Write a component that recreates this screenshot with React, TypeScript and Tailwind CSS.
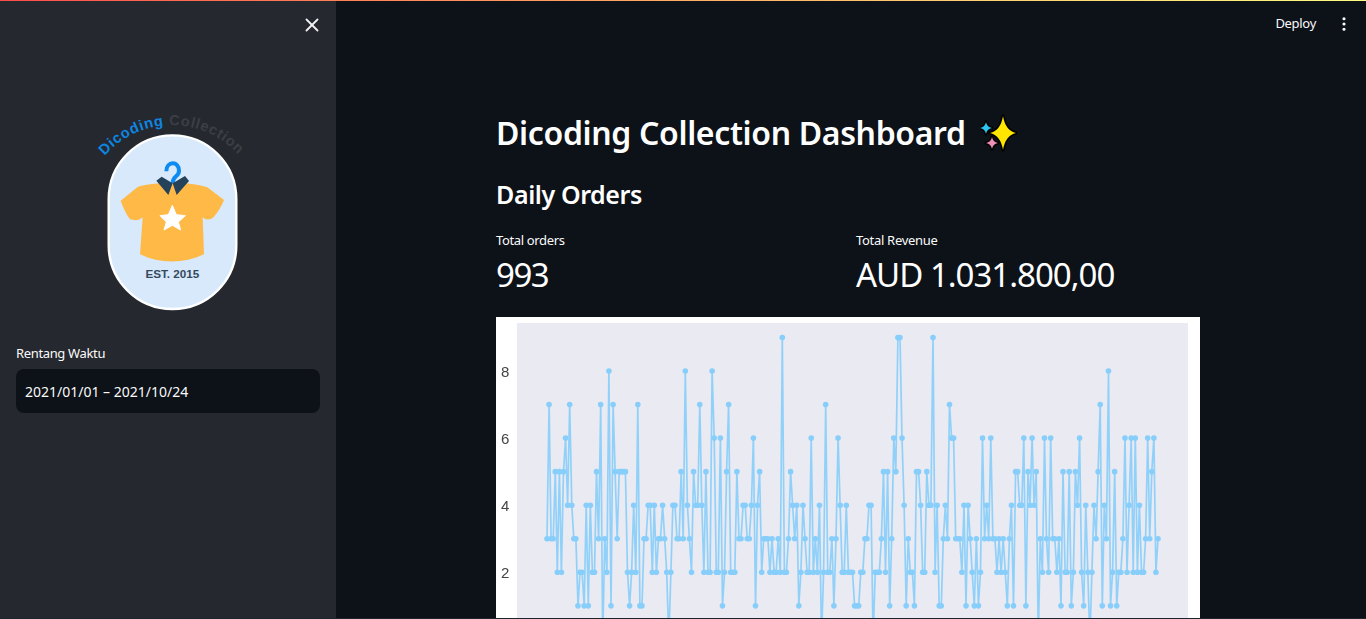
import { X, EllipsisVertical } from 'lucide-react'

const orders = [
  '3733525256', '4743312214', '1422537032', '8175355552', '1242711334',
  '4242334320', '2443353843', '2544742522', '8622612572', '2253344334',
  '6145233323', '2232922354', '3412432262', '3240272231', '3642242',
  '2211122334', '4022235251', '3659964132', '2155422544', '9241134376',
  '6333241432', '1312634363', '3232321341', '5544615464', '5032632633',
  '2315225125', '4621420243', '5714381251', '2236246262', '4223635623',
]
  .join('')
  .split('')
  .map(Number)

const toX = (i: number) => 51 + (i * 611) / (orders.length - 1)
const toY = (v: number) => 54 + (8 - v) * 33.55

function OrdersChart() {
  const points = orders.map((v, i) => `${toX(i).toFixed(1)},${toY(v).toFixed(1)}`).join(' ')
  return (
    <svg width="704" height="340" viewBox="0 0 704 340" className="block bg-white">
      <rect x="21" y="6" width="671" height="334" fill="#eaeaf2" />
      <g className="blur-[0.4px]">
        {[8, 6, 4, 2].map((t) => (
          <text key={t} x="5" y={toY(t) + 5.5} fontSize="15" fill="#444444" fontFamily="Liberation Sans, sans-serif">
            {t}
          </text>
        ))}
      </g>
      <g className="blur-[0.5px]">
        <polyline points={points} fill="none" stroke="#87cefa" strokeWidth="1.7" strokeLinejoin="round" opacity="0.9" />
        {orders.map((v, i) => (
          <circle key={i} cx={toX(i)} cy={toY(v)} r="2.8" fill="#87cefa" />
        ))}
      </g>
    </svg>
  )
}

function Logo() {
  return (
    <svg width="180" height="220" viewBox="0 0 540 660" className="block">
      <defs>
        <path id="logo-arc" d="M70 172 A268 268 0 0 1 482 172" />
      </defs>
      <text fontSize="44" fontWeight="700" fontFamily="Liberation Sans, sans-serif" letterSpacing="4">
        <textPath href="#logo-arc" startOffset="6" textLength="456">
          <tspan fill="#0d86e2">Dicoding</tspan>
          <tspan fill="#3b3e45"> Collection</tspan>
        </textPath>
      </text>
      <rect x="86" y="106" width="383" height="521" rx="191" fill="#d7e9fb" stroke="#ffffff" strokeWidth="7" />
      <path
        d="M259 214 C259 182 297 182 297 212 C297 232 278 226 278 250"
        fill="none"
        stroke="#0d8bf0"
        strokeWidth="12"
      />
      <path
        d="M236 250 C205 254 190 254 172 262 L122 302 C130 325 140 345 150 358 C165 362 178 362 188 352 L180 463 C240 492 310 492 372 463 L368 352 C378 362 392 358 398 354 C412 340 424 320 432 300 L382 262 C360 254 340 254 320 250 Z"
        fill="#ffb947"
      />
      <path d="M229 242 L245 230 L278 250 L265 285 Z M278 250 L315 228 L327 243 L290 285 Z" fill="#24425a" />
      <path
        d="M277 316 L289 344 L316 347 L295 366 L302 390 L277 376 L252 390 L259 366 L240 347 L265 344 Z"
        fill="#ffffff"
        stroke="#ffffff"
        strokeWidth="3"
        strokeLinejoin="round"
      />
      <text x="277" y="534" textAnchor="middle" fontSize="35" fontWeight="700" fill="#34495e" fontFamily="Liberation Sans, sans-serif">
        EST. 2015
      </text>
    </svg>
  )
}

function Sparkle({ x, y, v, h, fill }: { x: number; y: number; v: number; h: number; fill: string }) {
  const a = v * 0.14
  return (
    <path
      d={`M${x} ${y - v} Q${x + a} ${y - a} ${x + h} ${y} Q${x + a} ${y + a} ${x} ${y + v} Q${x - a} ${y + a} ${x - h} ${y} Q${x - a} ${y - a} ${x} ${y - v}Z`}
      fill={fill}
      stroke="#000000"
      strokeWidth="3"
      strokeLinejoin="round"
      paintOrder="stroke"
    />
  )
}

export default function App() {
  return (
    <div className="relative flex h-screen overflow-hidden bg-[#0d1118] text-white font-['Noto_Sans',sans-serif]">
      <div className="absolute inset-x-0 top-0 z-10 h-px bg-gradient-to-r from-[#ff4b4b] to-[#fffd80]" />
      <div className="absolute inset-x-0 bottom-0 z-10 h-px bg-[#1c252e]" />

      <aside className="w-[336px] shrink-0 bg-[#25282f] px-4">
        <div className="flex justify-end pt-[14px]">
          <button className="-mr-[3px] text-[#f0f0f2]">
            <X size={22} strokeWidth={2} />
          </button>
        </div>
        <div className="mt-[64px] ml-[64px]">
          <Logo />
        </div>
        <label className="mt-[23px] block text-[13px] leading-[20px] tracking-[-0.35px] text-[#fafafa]">
          Rentang Waktu
        </label>
        <div className="mt-[6px] flex h-[44px] items-center rounded-lg bg-[#0d1118] px-[9px] text-[14px] text-[#fafafa]">
          2021/01/01 – 2021/10/24
        </div>
      </aside>

      <main className="min-w-0 flex-1">
        <header className="flex h-[46px] items-center justify-end pr-[13px] pt-[2px]">
          <span className="text-[13px] tracking-[-0.3px] text-[#fafafa]">Deploy</span>
          <EllipsisVertical size={18} strokeWidth={2.25} className="ml-[19px] text-[#fafafa]" />
        </header>
        <div className="ml-[160px] w-[704px]">
          <div className="mt-[65px] flex h-[44px] items-center">
            <h1 className="text-[32px] font-semibold leading-[44px] tracking-[-0.35px]">Dicoding Collection Dashboard</h1>
            <svg width="40" height="40" viewBox="0 0 40 40" className="ml-[14px]">
              <Sparkle x={6} y={15} v={6} h={6} fill="#2ec4f0" />
              <Sparkle x={12} y={30} v={6} h={6} fill="#f090b8" />
              <Sparkle x={23} y={20} v={17} h={13} fill="#ffe600" />
            </svg>
          </div>
          <h2 className="mt-[21px] text-[25px] font-semibold leading-[36px] tracking-[-0.4px]">Daily Orders</h2>
          <div className="mt-[18px] grid grid-cols-[360px_1fr]">
            <div>
              <p className="text-[13px] leading-[20px] tracking-[-0.35px] text-[#fafafa]">Total orders</p>
              <p className="mt-[1px] text-[33px] leading-[48px] tracking-[-1.5px]">993</p>
            </div>
            <div>
              <p className="text-[13px] leading-[20px] tracking-[-0.3px] text-[#fafafa]">Total Revenue</p>
              <p className="mt-[1px] text-[33px] leading-[48px] tracking-[-1px]">AUD 1.031.800,00</p>
            </div>
          </div>
          <div className="mt-[18px]">
            <OrdersChart />
          </div>
        </div>
      </main>
    </div>
  )
}
